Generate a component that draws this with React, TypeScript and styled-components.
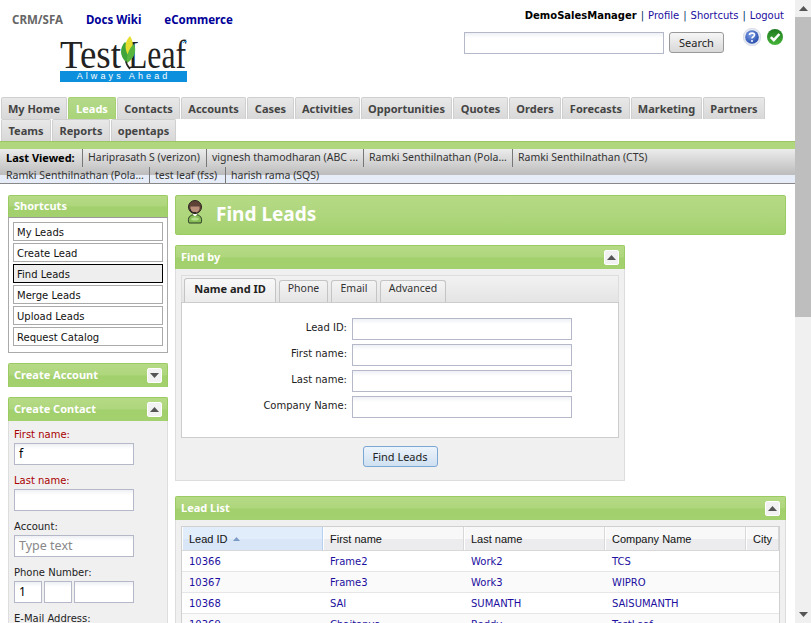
import { createGlobalStyle, styled } from "styled-components";

const GlobalStyle = createGlobalStyle`
  html, body {
    margin: 0;
    padding: 0;
    height: 100%;
    overflow: hidden;
    background: #fff;
  }
  body {
    font-family: "DejaVu Sans", Verdana, sans-serif;
    font-size: 10px;
    color: #000;
  }
  * { box-sizing: border-box; }
`;

const narrow = `"Noto Sans", Tahoma, sans-serif`;
const linkBlue = "#1c0fa0";
const greenBar = `linear-gradient(#b6da86 0%, #aed67c 48%, #a2d06c 52%, #a4d16f 100%)`;

const Shell = styled.div`
  display: flex;
  width: 811px;
  height: 623px;
  overflow: hidden;
`;

const Page = styled.div`
  width: 795px;
  flex: none;
`;

/* page scrollbar */
const ScrollTrack = styled.div`
  width: 16px;
  flex: none;
  background: #f0f0f0;
  display: flex;
  flex-direction: column;
  align-items: center;
`;

const ScrollArrow = styled.div`
  height: 17px;
  width: 100%;
  flex: none;
  display: flex;
  align-items: center;
  justify-content: center;
`;

const ScrollThumb = styled.div`
  width: 100%;
  height: 300px;
  flex: none;
  background: #bebebe;
`;

const ScrollSpacer = styled.div`
  flex: 1;
`;

const Header = styled.div`
  height: 97px;
  display: flex;
  justify-content: space-between;
`;

const HeaderLeft = styled.div`
  padding: 12px 0 0 12px;
`;

const AppLinks = styled.div`
  display: flex;
  gap: 23px;
  height: 24px;
  font-family: ${narrow};
  font-weight: bold;
  font-size: 11.5px;
`;

const AppLink = styled.a<{ $current?: boolean }>`
  color: ${(p) => (p.$current ? "#666" : "#000099")};
`;

const LogoBox = styled.div`
  margin-left: 48px;
  width: 127px;
`;

const LogoBar = styled.div`
  height: 11px;
  background: #0c8fdc;
  color: #fff;
  font-family: "Liberation Sans", Arial, sans-serif;
  font-size: 9px;
  line-height: 11px;
  letter-spacing: 3.1px;
  text-align: center;
  white-space: nowrap;
`;

const HeaderRight = styled.div`
  width: 320px;
  padding: 10px 11px 0 0;
  display: flex;
  flex-direction: column;
  align-items: flex-end;
`;

const UserLine = styled.div`
  height: 22px;
  display: flex;
  gap: 4px;
  color: #036;
  white-space: nowrap;
`;

const UserName = styled.b`
  color: #000;
`;

const NavLink = styled.a`
  color: ${linkBlue};
`;

const SearchRow = styled.div`
  display: flex;
  align-items: flex-start;
  width: 320px;
`;

const TextBox = styled.div<{ $w: number; $h?: number }>`
  width: ${(p) => p.$w}px;
  height: ${(p) => p.$h ?? 22}px;
  flex: none;
  border: 1px solid #b5b8c8;
  background: linear-gradient(#eef0f4 0, #fff 5px);
  font-family: ${narrow};
  font-size: 12px;
  padding: 2px 4px;
  line-height: 16px;
  color: #000;
`;

const Placeholder = styled.span`
  color: #888;
  font-size: 12.5px;
`;

const PlainButton = styled.div`
  margin-left: 5px;
  width: 55px;
  height: 21px;
  border: 1px solid #999;
  border-radius: 3px;
  background: linear-gradient(#f6f6f6, #d8d8d8);
  font-family: ${narrow};
  font-size: 11px;
  line-height: 19px;
  text-align: center;
  color: #222;
`;

const StatusIcons = styled.div`
  margin-left: 19px;
  margin-top: -4px;
  display: flex;
  align-items: center;
  gap: 6px;
`;

const TabRow = styled.div`
  display: flex;
  height: 22px;
  padding-left: 1px;
  gap: 1px;
`;

const MainTab = styled.div<{ $w: number; $active?: boolean }>`
  width: ${(p) => p.$w}px;
  flex: none;
  border: 1px solid ${(p) => (p.$active ? "#a6d072" : "#cfcfcf")};
  border-bottom: 0;
  border-radius: 2px 2px 0 0;
  background: ${(p) =>
    p.$active
      ? "linear-gradient(#b4d98a, #a9d478)"
      : "linear-gradient(#e8e8e8, #d8d8d8)"};
  color: ${(p) => (p.$active ? "#fff" : "#444")};
  font-family: ${narrow};
  font-weight: bold;
  font-size: 11px;
  line-height: 22px;
  text-align: center;
  white-space: nowrap;
`;

const GreenStrip = styled.div`
  height: 8px;
  background: #b0d77e;
  border-top: 1px solid #9cc568;
`;

const Recent = styled.div`
  height: 35px;
  border-bottom: 1px solid #888;
  background: linear-gradient(#ececec 0, #bcbcbc 26px, #e6edf8 26px, #e6edf8 100%);
  font-family: ${narrow};
  font-size: 10.5px;
  color: #333;
`;

const RecentRow = styled.div<{ $h: number }>`
  display: flex;
  height: ${(p) => p.$h}px;
  padding-left: 1px;
`;

const RecentItem = styled.div<{ $w: number; $first?: boolean }>`
  width: ${(p) => p.$w}px;
  flex: none;
  line-height: 17px;
  padding-left: 5px;
  white-space: nowrap;
  border-left: ${(p) => (p.$first ? "0" : "1px solid #777")};
`;

const RecentLabel = styled(RecentItem)`
  font-weight: bold;
  font-size: 11px;
  color: #000;
`;

const Columns = styled.div`
  display: flex;
  align-items: flex-start;
  padding: 11px 9px 0 8px;
  gap: 7px;
`;

const Sidebar = styled.div`
  width: 160px;
  flex: none;
  display: flex;
  flex-direction: column;
  gap: 10px;
`;

const Content = styled.div`
  width: 611px;
  flex: none;
`;

const PanelHead = styled.div<{ $h?: number }>`
  height: ${(p) => p.$h ?? 24}px;
  border: 1px solid #9ccb63;
  border-bottom: 0;
  border-radius: 2px 2px 0 0;
  background: ${greenBar};
  color: #fff;
  font-family: ${narrow};
  font-weight: bold;
  font-size: 11px;
  padding: 0 5px 2px;
  display: flex;
  align-items: center;
  justify-content: space-between;
`;

const Toggle = styled.div`
  width: 15px;
  height: 15px;
  margin-top: 2px;
  border-radius: 2px;
  background: #f2f2f2;
  border: 1px solid #fff;
  display: flex;
  align-items: center;
  justify-content: center;
`;

const ShortcutBody = styled.div`
  height: 136px;
  border: 1px solid #aaa;
  border-top-color: #999;
  padding: 4px 4px 0;
  display: flex;
  flex-direction: column;
  gap: 2px;
`;

const Shortcut = styled.div<{ $active?: boolean }>`
  height: 19px;
  border: 1px solid ${(p) => (p.$active ? "#000" : "#aaa")};
  background: ${(p) => (p.$active ? "#eee" : "#fff")};
  line-height: 19px;
  padding-left: 3px;
  color: #111;
`;

const GrayBody = styled.div`
  background: #f0f0f0;
  border: 1px solid #ddd;
  border-top: 0;
`;

const ContactBody = styled(GrayBody)`
  height: 300px;
  padding: 6px 5px;
`;

const SideLabel = styled.div<{ $required?: boolean }>`
  height: 16px;
  line-height: 15px;
  color: ${(p) => (p.$required ? "#a00" : "#222")};
`;

const SideField = styled.div`
  margin-bottom: 8px;
  display: flex;
  gap: 2px;
  flex-wrap: wrap;
`;

const TitleBar = styled.div`
  height: 40px;
  border: 1px solid #9ccb63;
  border-radius: 2px;
  background: linear-gradient(#b6da86 0%, #aed67c 50%, #a4d16f 100%);
  display: flex;
  align-items: center;
  padding-left: 10px;
  margin-bottom: 10px;
`;

const PageTitle = styled.div`
  margin-left: 13px;
  margin-top: -2px;
  color: #fff;
  font-family: ${narrow};
  font-weight: bold;
  font-size: 19px;
`;

const FindPanel = styled.div`
  width: 450px;
  margin-bottom: 15px;
`;

const FindBody = styled(GrayBody)`
  height: 212px;
  padding: 6px 5px 0;
`;

const TabStrip = styled.div`
  height: 27px;
  border: 1px solid #ddd;
  border-bottom: 0;
  background: linear-gradient(#f2f2f2, #e4e4e4);
  display: flex;
  align-items: flex-end;
  padding-left: 2px;
  gap: 3px;
`;

const FindTab = styled.div<{ $w: number; $active?: boolean }>`
  width: ${(p) => p.$w}px;
  height: ${(p) => (p.$active ? 24 : 22)}px;
  border: 1px solid #c4c4c4;
  border-bottom: 0;
  border-radius: 3px 3px 0 0;
  background: ${(p) => (p.$active ? "linear-gradient(#f8f8f8, #ececec)" : "linear-gradient(#f4f4f4, #e4e4e4)")};
  color: ${(p) => (p.$active ? "#222" : "#333")};
  font-family: ${narrow};
  font-weight: ${(p) => (p.$active ? "bold" : "normal")};
  font-size: ${(p) => (p.$active ? 11 : 10.5)}px;
  line-height: ${(p) => (p.$active ? 19 : 15)}px;
  text-align: center;
  white-space: nowrap;
`;

const TabPanel = styled.div`
  height: 136px;
  background: #fff;
  border: 1px solid #ccc;
  padding-top: 15px;
  display: flex;
  flex-direction: column;
  gap: 4px;
`;

const FormRow = styled.div`
  display: flex;
  align-items: center;
  height: 22px;
  padding-left: 70px;
`;

const FormLabel = styled.div`
  width: 95px;
  flex: none;
  text-align: right;
  margin-right: 5px;
  margin-top: -4px;
  color: #222;
  white-space: nowrap;
`;

const ButtonRow = styled.div`
  display: flex;
  justify-content: center;
  padding: 8px 0 0 0;
`;

const BlueButton = styled.div`
  width: 75px;
  height: 21px;
  border: 1px solid #7ba7d4;
  border-radius: 3px;
  background: linear-gradient(#edf4fb, #cfe0f1);
  font-family: ${narrow};
  font-size: 11px;
  line-height: 19px;
  text-align: center;
  color: #222;
`;

const ListBody = styled(GrayBody)`
  padding: 6px 5px 0;
  height: 400px;
`;

const Grid = styled.div`
  border: 1px solid #d0d0d0;
  background: #fff;
`;

const GridHeadRow = styled.div`
  display: flex;
  height: 24px;
  padding-left: 1px;
  border-bottom: 1px solid #d8d8d8;
  font-family: "Liberation Sans", Arial, sans-serif;
  font-size: 11px;
`;

const GridHeadCell = styled.div<{ $w: number; $sorted?: boolean }>`
  width: ${(p) => p.$w}px;
  flex: none;
  padding: 1px 0 0 6px;
  color: #111;
  border-right: 1px solid ${(p) => (p.$sorted ? "#b5d0f0" : "#d8d8d8")};
  margin-right: 1px;
  background: ${(p) =>
    p.$sorted
      ? "linear-gradient(#e2edfb 50%, #d8e6f8 50%)"
      : "linear-gradient(#f8f8f8 50%, #ececee 50%)"};
  display: flex;
  align-items: center;
  gap: 5px;
`;

const GridRow = styled.div<{ $odd?: boolean }>`
  display: flex;
  height: 21px;
  padding-left: 1px;
  background: ${(p) => (p.$odd ? "#fafafa" : "#fff")};
  border-bottom: 1px solid #e6e6e6;
`;

const GridCell = styled.a<{ $w: number }>`
  width: ${(p) => p.$w}px;
  flex: none;
  margin-right: 1px;
  padding-left: 6px;
  line-height: 22px;
  color: ${linkBlue};
  white-space: nowrap;
`;

const columns = [
  { label: "Lead ID", w: 140 },
  { label: "First name", w: 140 },
  { label: "Last name", w: 140 },
  { label: "Company Name", w: 140 },
  { label: "City", w: 32 },
];

const leads = [
  ["10366", "Frame2", "Work2", "TCS", ""],
  ["10367", "Frame3", "Work3", "WIPRO", ""],
  ["10368", "SAI", "SUMANTH", "SAISUMANTH", ""],
  ["10369", "Chaitanya", "Reddy", "TestLeaf", ""],
];

const mainTabs = [
  { label: "My Home", w: 66 },
  { label: "Leads", w: 48, active: true },
  { label: "Contacts", w: 63 },
  { label: "Accounts", w: 65 },
  { label: "Cases", w: 47 },
  { label: "Activities", w: 65 },
  { label: "Opportunities", w: 91 },
  { label: "Quotes", w: 55 },
  { label: "Orders", w: 52 },
  { label: "Forecasts", w: 68 },
  { label: "Marketing", w: 71 },
  { label: "Partners", w: 62 },
];

const Caret = ({ up }: { up?: boolean }) => (
  <svg width="9" height="5" viewBox="0 0 9 5">
    <path d={up ? "M0 5L4.5 0L9 5Z" : "M0 0L4.5 5L9 0Z"} fill="#555" />
  </svg>
);

// wordmark with the leaf between the two words, the blue strip is LogoBar
const LogoMark = () => (
  <svg width="127" height="35" viewBox="0 0 127 35" style={{ display: "block", overflow: "visible" }}>
    <text x="0" y="32" fontFamily="Liberation Serif, serif" fontSize="40" fill="#222" textLength="61" lengthAdjust="spacingAndGlyphs">
      Test
    </text>
    <text x="68" y="32" fontFamily="Liberation Serif, serif" fontSize="40" fill="#222" textLength="58" lengthAdjust="spacingAndGlyphs">
      Leaf
    </text>
    <path d="M70 33C64 26 65 20 67 14" stroke="#222" strokeWidth="1.6" fill="none" />
    <path d="M66 26C59 20 60 11 65 6C71 11 72 20 66 26Z" fill="#3fa53a" />
    <path d="M68 19C64 12 65 5 70 0C74 6 74 13 68 19Z" fill="#e6df30" />
    <path d="M67 27C74 23 77 15 74 8C69 12 66 20 67 27Z" fill="#58b53e" />
    <path d="M123 7C124 5 126 5 127 6" stroke="#2a9be0" strokeWidth="1" fill="none" />
  </svg>
);

const HelpIcon = () => (
  <svg width="18" height="18" viewBox="0 0 18 18">
    <defs>
      <radialGradient id="helpFill" cx="0.4" cy="0.35" r="0.7">
        <stop offset="0" stopColor="#7f9fe6" />
        <stop offset="1" stopColor="#2349a8" />
      </radialGradient>
    </defs>
    <circle cx="9" cy="9" r="8.8" fill="#e4e8f2" stroke="#c2c8d8" strokeWidth="0.5" />
    <circle cx="9" cy="9" r="6.8" fill="url(#helpFill)" />
    <path d="M6.5 7C6.5 4.5 11.5 4.5 11.5 7C11.5 9 9 8.6 9 10.5" stroke="#fff" strokeWidth="1.6" fill="none" />
    <circle cx="9" cy="13" r="1" fill="#fff" />
  </svg>
);

const CheckIcon = () => (
  <svg width="16" height="16" viewBox="0 0 16 16">
    <defs>
      <linearGradient id="okFill" x1="0" y1="0" x2="0" y2="1">
        <stop offset="0" stopColor="#1f7a1f" />
        <stop offset="1" stopColor="#45b53a" />
      </linearGradient>
    </defs>
    <circle cx="8" cy="8" r="8" fill="url(#okFill)" />
    <path d="M3.8 8.2L6.8 11.2L12.4 5" stroke="#fff" strokeWidth="2.6" fill="none" />
  </svg>
);

const AgentIcon = () => (
  <svg width="16" height="24" viewBox="0 0 16 24" style={{ marginLeft: 1, marginTop: -6, flex: "none" }}>
    <path d="M2 23C0 18 3 14.5 8 14.5C13 14.5 16 18 14 23Z" fill="#86bf55" stroke="#2f3a2a" />
    <path d="M4 19C5 17 11 17 12 19C11 21 5 21 4 19Z" fill="#b5dd8c" />
    <circle cx="8" cy="7" r="6.5" fill="#5f4236" stroke="#2c2420" />
    <path d="M3.5 6.5H12.5V9C12 11.5 10 12.5 8 12.5C6 12.5 4 11.5 3.5 9Z" fill="#b98e7a" />
    <path d="M3 9C3.5 12 6 13 9 12.5" stroke="#222" strokeWidth="1" fill="none" />
    <path d="M5.5 14L8 16.5L10.5 14Z" fill="#fff" />
  </svg>
);

const App = () => {
  return (
    <Shell>
      <GlobalStyle />
      <Page>
        <Header>
          <HeaderLeft>
            <AppLinks>
              <AppLink $current>CRM/SFA</AppLink>
              <AppLink>Docs Wiki</AppLink>
              <AppLink>eCommerce</AppLink>
            </AppLinks>
            <LogoBox>
              <LogoMark />
              <LogoBar>Always Ahead</LogoBar>
            </LogoBox>
          </HeaderLeft>
          <HeaderRight>
            <UserLine>
              <UserName>DemoSalesManager</UserName>|<NavLink>Profile</NavLink>|
              <NavLink>Shortcuts</NavLink>|<NavLink>Logout</NavLink>
            </UserLine>
            <SearchRow>
              <TextBox $w={200} />
              <PlainButton>Search</PlainButton>
              <StatusIcons>
                <HelpIcon />
                <CheckIcon />
              </StatusIcons>
            </SearchRow>
          </HeaderRight>
        </Header>

        <TabRow>
          {mainTabs.map((t) => (
            <MainTab key={t.label} $w={t.w} $active={t.active}>
              {t.label}
            </MainTab>
          ))}
        </TabRow>
        <TabRow>
          <MainTab $w={50}>Teams</MainTab>
          <MainTab $w={58}>Reports</MainTab>
          <MainTab $w={65}>opentaps</MainTab>
        </TabRow>
        <GreenStrip />

        <Recent>
          <RecentRow $h={18}>
            <RecentLabel $w={81} $first>Last Viewed:</RecentLabel>
            <RecentItem $w={124}>Hariprasath S (verizon)</RecentItem>
            <RecentItem $w={157}>vignesh thamodharan (ABC ...</RecentItem>
            <RecentItem $w={149}>Ramki Senthilnathan (Pola...</RecentItem>
            <RecentItem $w={150}>Ramki Senthilnathan (CTS)</RecentItem>
          </RecentRow>
          <RecentRow $h={16}>
            <RecentItem $w={148} $first>Ramki Senthilnathan (Pola...</RecentItem>
            <RecentItem $w={76}>test leaf (fss)</RecentItem>
            <RecentItem $w={120}>harish rama (SQS)</RecentItem>
          </RecentRow>
        </Recent>

        <Columns>
          <Sidebar>
            <div>
              <PanelHead $h={22}>Shortcuts</PanelHead>
              <ShortcutBody>
                <Shortcut>My Leads</Shortcut>
                <Shortcut>Create Lead</Shortcut>
                <Shortcut $active>Find Leads</Shortcut>
                <Shortcut>Merge Leads</Shortcut>
                <Shortcut>Upload Leads</Shortcut>
                <Shortcut>Request Catalog</Shortcut>
              </ShortcutBody>
            </div>
            <PanelHead>
              Create Account
              <Toggle><Caret /></Toggle>
            </PanelHead>
            <div>
              <PanelHead>
                Create Contact
                <Toggle><Caret up /></Toggle>
              </PanelHead>
              <ContactBody>
                <SideLabel $required>First name:</SideLabel>
                <SideField><TextBox $w={120}>f</TextBox></SideField>
                <SideLabel $required>Last name:</SideLabel>
                <SideField><TextBox $w={120} /></SideField>
                <SideLabel>Account:</SideLabel>
                <SideField>
                  <TextBox $w={120}><Placeholder>Type text</Placeholder></TextBox>
                </SideField>
                <SideLabel>Phone Number:</SideLabel>
                <SideField>
                  <TextBox $w={28}>1</TextBox>
                  <TextBox $w={28} />
                  <TextBox $w={60} />
                </SideField>
                <SideLabel>E-Mail Address:</SideLabel>
              </ContactBody>
            </div>
          </Sidebar>

          <Content>
            <TitleBar>
              <AgentIcon />
              <PageTitle>Find Leads</PageTitle>
            </TitleBar>

            <FindPanel>
              <PanelHead>
                Find by
                <Toggle><Caret up /></Toggle>
              </PanelHead>
              <FindBody>
                <TabStrip>
                  <FindTab $w={92} $active>Name and ID</FindTab>
                  <FindTab $w={49}>Phone</FindTab>
                  <FindTab $w={46}>Email</FindTab>
                  <FindTab $w={66}>Advanced</FindTab>
                </TabStrip>
                <TabPanel>
                  <FormRow><FormLabel>Lead ID:</FormLabel><TextBox $w={220} /></FormRow>
                  <FormRow><FormLabel>First name:</FormLabel><TextBox $w={220} /></FormRow>
                  <FormRow><FormLabel>Last name:</FormLabel><TextBox $w={220} /></FormRow>
                  <FormRow><FormLabel>Company Name:</FormLabel><TextBox $w={220} /></FormRow>
                </TabPanel>
                <ButtonRow>
                  <BlueButton>Find Leads</BlueButton>
                </ButtonRow>
              </FindBody>
            </FindPanel>

            <PanelHead>
              Lead List
              <Toggle><Caret up /></Toggle>
            </PanelHead>
            <ListBody>
              <Grid>
                <GridHeadRow>
                  {columns.map((c, i) => (
                    <GridHeadCell key={c.label} $w={c.w} $sorted={i === 0}>
                      {c.label}
                      {i === 0 && (
                        <svg width="7" height="4" viewBox="0 0 7 4">
                          <path d="M0 4L3.5 0L7 4Z" fill="#7a9cc6" />
                        </svg>
                      )}
                    </GridHeadCell>
                  ))}
                </GridHeadRow>
                {leads.map((row, r) => (
                  <GridRow key={row[0]} $odd={r % 2 === 1}>
                    {row.map((v, i) => (
                      <GridCell key={i} $w={columns[i].w}>{v}</GridCell>
                    ))}
                  </GridRow>
                ))}
              </Grid>
            </ListBody>
          </Content>
        </Columns>
      </Page>
      <ScrollTrack>
        <ScrollArrow><Caret up /></ScrollArrow>
        <ScrollThumb />
        <ScrollSpacer />
        <ScrollArrow><Caret /></ScrollArrow>
      </ScrollTrack>
    </Shell>
  );
};

export default App;
